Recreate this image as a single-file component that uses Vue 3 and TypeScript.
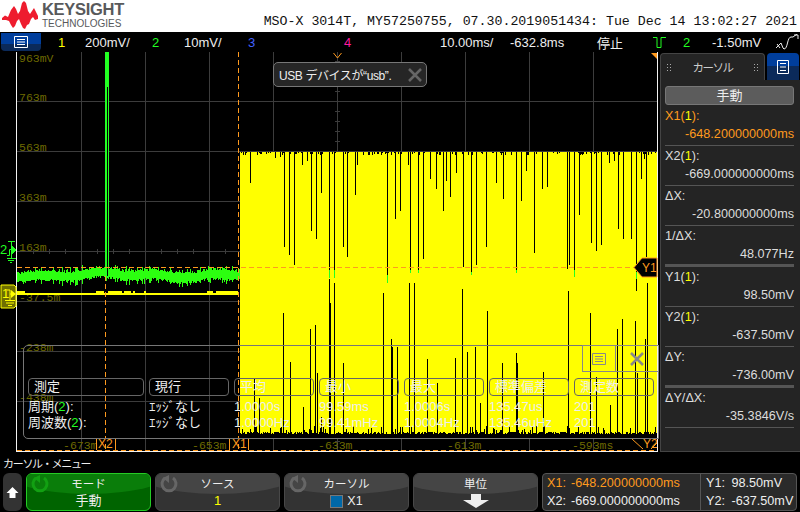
<script setup lang="ts">
import { computed } from 'vue';

interface StatusItem {
  text: string;
  x: number;
  color: string;
}

// left edge of every item in the status strip
const statusItems: StatusItem[] = [
  { text: '1', x: 58, color: '#ffff00' },
  { text: '200mV/', x: 85, color: '#eee' },
  { text: '2', x: 152, color: '#22ff22' },
  { text: '10mV/', x: 184, color: '#eee' },
  { text: '3', x: 248, color: '#4060ff' },
  { text: '4', x: 344, color: '#ff1aa0' },
  { text: '10.00ms/', x: 440, color: '#eee' },
  { text: '-632.8ms', x: 510, color: '#eee' },
  { text: '停止', x: 597, color: '#eee' }
];

const statusWidths = computed(() =>
  statusItems.map((item, i) => (statusItems[i + 1]?.x ?? 650) - item.x)
);

const gridX = [81, 145, 209, 273, 337, 401, 465, 529, 593];
const gridY = [101, 151, 201, 251, 301, 351, 401];

const yLabels = [
  ['963mV', 62],
  ['763m', 101],
  ['563m', 151],
  ['363m', 201],
  ['163m', 251],
  ['-37.5m', 301],
  ['-238m', 351],
  ['-438m', 401]
] as const;

const xLabels = [
  ['-673m', 63],
  ['-653m', 192],
  ['-633m', 318],
  ['-613m', 447],
  ['-593ms', 572]
] as const;

// black gaps hanging from the top of the yellow block: x, end y
const topGaps = [
  [250, 183], [275, 158], [280, 157], [284, 247], [289, 255], [294, 265], [302, 165], [307, 161],
  [311, 231], [316, 239], [321, 193], [329, 278], [334, 278], [343, 247], [347, 257], [355, 195],
  [357, 165], [387, 275], [395, 219], [400, 211], [408, 165], [410, 273], [418, 273], [423, 259],
  [430, 179], [436, 189], [443, 211], [446, 181], [450, 197], [456, 173], [463, 267], [471, 275],
  [476, 265], [486, 247], [496, 183], [503, 199], [516, 273], [521, 201], [526, 171], [534, 253],
  [542, 189], [547, 187], [567, 269], [569, 265], [574, 277], [579, 215], [591, 243], [596, 251],
  [601, 245], [609, 163], [614, 161], [618, 229], [623, 239], [631, 239], [636, 291], [641, 179],
  [644, 159], [646, 257]
];

// black gaps standing on the bottom of the yellow block: x, start y
const bottomGaps = [
  [254, 379], [259, 398], [283, 313], [290, 362], [303, 407], [310, 329], [315, 325], [317, 373],
  [321, 417], [329, 279], [330, 303], [334, 283], [343, 363], [383, 293], [391, 339], [392, 347],
  [397, 347], [409, 283], [414, 283], [427, 359], [437, 383], [455, 358], [462, 289], [467, 352],
  [475, 347], [480, 403], [487, 311], [502, 363], [516, 353], [517, 363], [543, 372], [568, 291],
  [590, 313], [596, 377], [610, 405], [617, 329], [622, 319], [635, 321], [637, 373], [645, 339],
  [647, 283], [655, 427]
];

// little bits of the green trace showing through the gaps
const greenBits = [
  [329, 270, 8], [334, 270, 8], [387, 275, 8], [410, 270, 3], [418, 270, 3],
  [471, 272, 3], [516, 270, 3], [574, 270, 7], [636, 272, 7]
];

function rng(seed: number) {
  let s = seed;
  return () => {
    s = (s * 1664525 + 1013904223) % 4294967296;
    return s / 4294967296;
  };
}

const topNotches = computed(() => {
  const r = rng(11);
  let d = '';
  for (let x = 241; x < 657; x++) {
    if (r() < 0.25) d += `M${x + 0.5} 152V${153 + Math.floor(r() * 3)}`;
  }
  return d;
});

const bottomFringe = computed(() => {
  const r = rng(37);
  let d = '';
  for (let x = 240; x < 657; x++) {
    const up = r() < 0.12 ? 4 + Math.floor(r() * 5) : Math.floor(r() * 3);
    d += `M${x + 0.5} ${434 - up}V438`;
  }
  return d;
});

const greenTrace = computed(() => {
  const r = rng(5);
  let d = '';
  for (let x = 17; x < 240; x++) {
    const mid = 275 + Math.sin(x / 9) * 1.5 + Math.sin(x / 23) * 1.5;
    const wild = r() < 0.15 ? 3 : 0;
    const top = Math.round(mid - 3.5 - r() * 3 - wild);
    const bot = Math.round(mid + 3.5 + r() * 3 + wild);
    d += `M${x + 0.5} ${top}V${bot}`;
  }
  return d;
});

const yellowBumps = [[17, 8], [96, 8], [108, 14], [124, 7], [133, 2], [144, 2], [207, 6], [216, 22]];

interface MeasureRow {
  name: string;
  cells: string[];
}

const measureHeads = ['現行', '平均', '最小', '最大', '標準偏差', '測定数'];
const measureRows: MeasureRow[] = [
  { name: '周期', cells: ['ｴｯｼﾞなし', '1.0000s', '99.59ms', '1.0006s', '135.47us', '201'] },
  { name: '周波数', cells: ['ｴｯｼﾞなし', '1.0000Hz', '99.41mHz', '1.0004Hz', '135.46uHz', '201'] }
];

interface CursorRow {
  label: string;
  ch?: string;
  value: string;
  active?: boolean;
  thick?: boolean;
}

const cursorRows: CursorRow[] = [
  { label: 'X1(', ch: '1', value: '-648.200000000ms', active: true },
  { label: 'X2(', ch: '1', value: '-669.000000000ms' },
  { label: 'ΔX:', value: '-20.800000000ms' },
  { label: '1/ΔX:', value: '48.077Hz', thick: true },
  { label: 'Y1(', ch: '1', value: '98.50mV' },
  { label: 'Y2(', ch: '1', value: '-637.50mV' },
  { label: 'ΔY:', value: '-736.00mV', thick: true },
  { label: 'ΔY/ΔX:', value: '-35.3846V/s' }
];
</script>

<template>
  <div class="scope">
    <header class="head">
      <div class="logo">
        <svg class="wave" width="38" height="32" viewBox="0 0 38 32">
          <path
            fill="#ee1c2e"
            d="M1 18 4 15.500 7 17 10 10 13 6 15 9 17 14 19 11 21 3 23 1 25 3 27 11 29 14 31 11 33 8 35 12 37 16 37 19 34 20 32 17 30 19 28 24 26 25 24 29 22 28 20 24 18 19 16 21 14 26 12 28 10 25 8 21 5 20 1 20Z"
          />
        </svg>
        <div class="brand">
          <span class="brand-top">KEYSIGHT</span>
          <span class="brand-sub">TECHNOLOGIES</span>
        </div>
      </div>
      <div class="title">MSO-X 3014T, MY57250755, 07.30.2019051434: Tue Dec 14 13:02:27 2021</div>
    </header>

    <div class="status">
      <div class="menu-btn">
        <svg width="14" height="12" viewBox="0 0 14 12">
          <path fill="none" stroke="#fff" d="M.5.5h13v11H.500zM3 3.500h8M3 6h8M3 8.500h8" />
        </svg>
      </div>
      <div class="status-gap" />
      <span
        v-for="(item, i) in statusItems"
        :key="item.x"
        class="status-item"
        :style="{ width: statusWidths[i] + 'px', color: item.color }"
      >{{ item.text }}</span>
      <svg class="trig" width="13" height="13" viewBox="0 0 13 13">
        <path fill="none" stroke="#22ff22" d="M0 1.500h4v10h4v-10H13" />
      </svg>
      <span class="trig-ch">2</span>
      <span class="trig-lvl">-1.50mV</span>
      <svg class="run" width="24" height="16" viewBox="0 0 24 16">
        <path fill="none" stroke="#eee" d="M1 14 6 9l2 5 1 1c4 0 3-12 7-12h2l4-3M2 10l3 4M19 1h4v4" />
      </svg>
    </div>

    <div class="main">
      <div class="plot">
        <svg class="canvas" width="660" height="400" viewBox="0 52 660 400" shape-rendering="crispEdges">
          <rect x="0" y="52" width="660" height="400" fill="#000" />
          <path v-for="x in gridX" :key="x" :d="`M${x + 0.5} 52V450`" stroke="#3c3c3c" />
          <path v-for="y in gridY" :key="y" :d="`M17 ${y + 0.5}H657`" stroke="#3c3c3c" />
          <path v-for="n in 39" :key="n" :d="`M${17 + n * 16 + 0.5} 249V254`" stroke="#3c3c3c" />
          <path v-for="n in 39" :key="n" :d="`M335 ${51 + n * 10 + 0.5}H340`" stroke="#3c3c3c" />

          <text v-for="[t, y] in yLabels" :key="t" class="axis" x="19" :y="y - 0">{{ t }}</text>

          <rect x="240" y="152" width="417" height="282" fill="#ffff00" />
          <path :d="topNotches" stroke="#000" />
          <path v-for="[x, y] in topGaps" :key="'t' + x" :d="`M${x + 0.5} 152V${y}`" stroke="#000" />
          <path v-for="[x, y] in bottomGaps" :key="'b' + x" :d="`M${x + 0.5} ${y}V434`" stroke="#000" />
          <rect v-for="[x, y, h] in greenBits" :key="'g' + x" :x="x" :y="y" width="1" :height="h" fill="#22ff22" />
          <path :d="bottomFringe" stroke="#000" />

          <rect x="17" y="293" width="222" height="2" fill="#ffff00" />
          <rect v-for="[x, w] in yellowBumps" :key="'y' + x" :x="x" y="291" :width="w" height="2" fill="#ffff00" />
          <path :d="greenTrace" stroke="#2cff10" />
          <rect x="105" y="52" width="4" height="226" fill="#22ff22" />
          <path d="M107.500 87V276" stroke="#000" />

          <path class="dash" d="M105.500 276V450" />
          <path class="dash" d="M238.500 52V450" />
          <path class="dash" d="M17 267.500H636" />
          <path class="dash" d="M17 450.500H658" />

          <path d="M17 51.500H658M16.500 52V452M657.500 52V452M16 451.500H658" stroke="#f2f2f2" fill="none" />
          <path d="M651 53h6v6z" fill="#ff9a1e" shape-rendering="auto" />
          <path d="M333.500 53 337.500 58 341.500 53" fill="none" stroke="#ff9a1e" shape-rendering="auto" />

          <text v-for="[t, x] in xLabels" :key="t" class="axis" :x="x" y="449">{{ t }}</text>

          <path d="M96 438.500h19.500V450M96.500 438V450" fill="#000" stroke="#ff9a1e" />
          <text class="flag" x="98" y="448">X2</text>
          <path d="M229 438.500h19.500V450M229.500 438V450" fill="#000" stroke="#ff9a1e" />
          <text class="flag" x="232" y="448">X1</text>
          <path d="M632 439l11 10M651 449l6-6" fill="none" stroke="#ff9a1e" shape-rendering="auto" />
          <text class="flag" x="643" y="448">Y2</text>

          <path d="M657 258H642L634 267.500 642 277H657Z" fill="#000" stroke="#ff9a1e" shape-rendering="auto" />
          <text class="flag" x="642" y="272">Y1</text>

          <g shape-rendering="auto" fill="none" stroke="#22ff22">
            <text x="0" y="254" class="gnd" fill="#22ff22" stroke="none">2</text>
            <path d="M8 241.500h7M11.500 241.500V258M7 258.500h9M8 260.500h6M10 262.500h2M7 255.500h2.500V249.500H15" />
            <path d="M12 246l4 4-4 4z" fill="#22ff22" />
          </g>
          <g shape-rendering="auto">
            <path d="M1 285h13l2 2v19l-2 2H1z" fill="#6e6e00" stroke="#ffff00" />
            <text x="2" y="298" class="gnd" fill="#ffff00">1</text>
            <path d="M7 290h3v10M5 300.500h10M6 303h8M8 305.500h4M10 294h3" fill="none" stroke="#ffff00" />
            <path d="M11 290l5 4-5 4z" fill="#ffff00" />
          </g>
        </svg>

        <div class="notice">
          <span class="notice-text">USB デバイスが“usb”.</span>
          <svg width="16" height="16" viewBox="0 0 16 16">
            <path d="M2 2 14 14M14 2 2 14" stroke="#666" stroke-width="2.500" />
          </svg>
        </div>

        <div class="measure">
          <div class="measure-tabs">
            <div class="measure-tab">
              <svg width="16" height="12" viewBox="0 0 16 12">
                <path fill="none" stroke="#888" d="M1.500.500h13v11h-13zM4 3.500h8M4 6h8M4 8.500h8" />
              </svg>
            </div>
            <div class="measure-tab wide">
              <svg width="14" height="14" viewBox="0 0 14 14">
                <path d="M1 1 13 13M13 1 1 13" stroke="#888" stroke-width="2.500" />
              </svg>
            </div>
          </div>
          <div class="measure-grid">
            <div class="measure-head first">測定</div>
            <div v-for="h in measureHeads" :key="h" class="measure-head">{{ h }}</div>
            <template v-for="row in measureRows" :key="row.name">
              <div class="measure-cell">{{ row.name }}(<span class="green">2</span>):</div>
              <div v-for="(c, i) in row.cells" :key="i" class="measure-cell">{{ c }}</div>
            </template>
          </div>
        </div>
      </div>

      <aside class="side">
        <div class="tabs">
          <div class="tab">
            <span class="grip" />
            <span class="tab-label">カーソル</span>
            <span class="grip" />
          </div>
          <div class="tab-blue">
            <svg width="14" height="14" viewBox="0 0 14 14">
              <path fill="none" stroke="#fff" d="M1.500.500h11v13h-11zM4 3.500h6M4 7h6M4 10.500h6" />
            </svg>
          </div>
        </div>
        <div class="side-body">
          <div class="mode-btn">手動</div>
          <div
            v-for="row in cursorRows"
            :key="row.label"
            class="cursor-row"
            :class="{ active: row.active, thick: row.thick }"
          >
            <div class="cursor-label">
              {{ row.label }}<template v-if="row.ch"><span class="yellow">{{ row.ch }}</span>):</template>
            </div>
            <div class="cursor-value">{{ row.value }}</div>
          </div>
        </div>
      </aside>
    </div>

    <footer class="foot">
      <div class="foot-title">カーソル・メニュー</div>
      <div class="keys">
        <div class="key arrow">
          <svg width="13" height="13" viewBox="0 0 13 13">
            <path fill="#fff" d="M6.500 1 12.500 7H9.500V12H3.500V7H.5Z" />
          </svg>
        </div>
        <div class="key soft on">
          <svg class="spin" width="20" height="18" viewBox="0 0 20 18">
            <path fill="none" stroke="currentColor" stroke-width="3" d="M6 3a7 7 0 1 0 8 0" />
            <path fill="currentColor" d="M10 0v8L4 3z" />
          </svg>
          <span class="key-top">モード</span>
          <span class="key-bot">手動</span>
        </div>
        <div class="key soft">
          <svg class="spin" width="20" height="18" viewBox="0 0 20 18">
            <path fill="none" stroke="currentColor" stroke-width="3" d="M6 3a7 7 0 1 0 8 0" />
            <path fill="currentColor" d="M10 0v8L4 3z" />
          </svg>
          <span class="key-top">ソース</span>
          <span class="key-bot yellow">1</span>
        </div>
        <div class="key soft">
          <svg class="spin" width="20" height="18" viewBox="0 0 20 18">
            <path fill="none" stroke="currentColor" stroke-width="3" d="M6 3a7 7 0 1 0 8 0" />
            <path fill="currentColor" d="M10 0v8L4 3z" />
          </svg>
          <span class="key-top">カーソル</span>
          <span class="key-bot small"><i class="swatch" />X1</span>
        </div>
        <div class="key soft">
          <span class="key-top">単位</span>
          <svg class="key-bot" width="26" height="16" viewBox="0 0 26 16">
            <path fill="#eee" d="M8 1h10v6h8L13 15 0 7h8z" />
          </svg>
        </div>
        <div class="readout">
          <div class="read-x">
            <div class="orange"><span class="read-name">X1:</span>-648.200000000ms</div>
            <div><span class="read-name">X2:</span>-669.000000000ms</div>
          </div>
          <div class="read-y">
            <div>Y1: 98.50mV</div>
            <div>Y2: -637.50mV</div>
          </div>
        </div>
      </div>
    </footer>
  </div>
</template>

<style scoped>
.scope {
  width: 800px;
  height: 512px;
  overflow: hidden;
  background: #000;
  color: #eee;
  font-family: "Liberation Sans", "Noto Sans CJK JP", sans-serif;
  font-size: 13px;
  display: flex;
  flex-direction: column;
}
.head {
  height: 32px;
  background: #fff;
  display: flex;
  justify-content: space-between;
}
.logo {
  display: flex;
  padding-left: 1px;
}
.wave {
  display: block;
}
.brand {
  display: flex;
  flex-direction: column;
  margin-left: 3px;
  color: #58595b;
  line-height: 1;
}
.brand-top {
  font-size: 16.500px;
  font-weight: 700;
  letter-spacing: -0.3px;
  margin-top: 1px;
}
.brand-sub {
  font-size: 10px;
  margin-top: 1px;
}
.title {
  font-family: "Liberation Mono", monospace;
  font-size: 13.280px;
  color: #111;
  padding: 14px 3px 0 0;
  line-height: 15px;
  white-space: nowrap;
}
.status {
  height: 20px;
  display: flex;
  align-items: center;
  white-space: nowrap;
}
.menu-btn {
  width: 40px;
  height: 18px;
  margin-left: 1px;
  border-radius: 0 0 4px 4px;
  background: linear-gradient(#003e9c 0 60%, #0b2a5a 60%);
  display: flex;
  align-items: center;
  justify-content: center;
}
.status-gap {
  width: 17px;
}
.status-item {
  display: block;
  flex: none;
}
.trig {
  margin-left: 3px;
  flex: none;
}
.trig-ch {
  color: #22ff22;
  margin-left: 17px;
  width: 29px;
  flex: none;
}
.trig-lvl {
  width: 63px;
  flex: none;
}
.run {
  flex: none;
}
.main {
  height: 400px;
  display: flex;
}
.plot {
  position: relative;
  width: 660px;
  height: 400px;
  flex: none;
}
.canvas {
  display: block;
}
.axis {
  font-family: "Liberation Mono", monospace;
  font-size: 11.500px;
  fill: #6e6a00;
}
.flag {
  font-family: "Liberation Sans", sans-serif;
  font-size: 12px;
  fill: #ff9a1e;
}
.gnd {
  font-family: "Liberation Sans", sans-serif;
  font-size: 13px;
}
.dash {
  fill: none;
  stroke: #ff9a1e;
  stroke-dasharray: 5 3;
}
.notice {
  position: absolute;
  left: 273px;
  top: 10px;
  width: 154px;
  height: 25px;
  box-sizing: border-box;
  border: 1px solid #777;
  border-radius: 5px;
  background: #262626;
  display: flex;
  align-items: center;
  justify-content: space-between;
  padding: 0 3px 0 5px;
  font-size: 12px;
  white-space: nowrap;
}
.notice-text {
  letter-spacing: -0.4px;
}
.measure {
  position: absolute;
  left: 23px;
  top: 293px;
  width: 636px;
  height: 94px;
  box-sizing: border-box;
  border: 1px solid #777;
  border-radius: 5px 0 0 5px;
  padding: 32px 0 0 4px;
}
.measure-tabs {
  position: absolute;
  right: -1px;
  top: -1px;
  display: flex;
}
.measure-tab {
  width: 34px;
  height: 27px;
  box-sizing: border-box;
  border: 1px solid #888;
  margin-left: -1px;
  display: flex;
  align-items: center;
  justify-content: center;
}
.measure-tab.wide {
  width: 44px;
}
.measure-grid {
  display: grid;
  grid-template-columns: 116px repeat(6, 80px);
  column-gap: 5px;
  grid-auto-rows: 18px;
  white-space: nowrap;
}
.measure-head {
  height: 18px;
  box-sizing: border-box;
  border: 1px solid #666;
  border-radius: 4px;
  padding-left: 5px;
  line-height: 16px;
  margin-bottom: 3px;
}
.measure-grid > .measure-cell:nth-child(-n + 14) {
  margin-top: 2px;
}
.measure-cell {
  line-height: 18px;
}
.green {
  color: #22ff22;
}
.yellow {
  color: #ffff00;
}
.orange {
  color: #ff9a1e;
}
.side {
  width: 140px;
  flex: none;
  height: 399px;
  border-bottom: 1px solid #444;
  box-sizing: content-box;
  display: flex;
  flex-direction: column;
}
.tabs {
  height: 28px;
  display: flex;
  padding-top: 1px;
  box-sizing: border-box;
  background: #000;
}
.tab {
  width: 105px;
  background: #242424;
  border: 1px solid #444;
  border-bottom: 0;
  border-radius: 4px 4px 0 0;
  box-sizing: border-box;
  display: flex;
  align-items: center;
  justify-content: space-between;
  padding: 0 5px;
}
.grip {
  width: 6px;
  height: 9px;
  background-image: radial-gradient(#aaa 0.8px, transparent 1px);
  background-size: 3px 3px;
}
.tab-label {
  font-size: 11.500px;
  letter-spacing: -1.500px;
  color: #ccc;
}
.tab-blue {
  width: 32px;
  margin-left: 2px;
  border-radius: 4px 4px 0 0;
  background: linear-gradient(#003e9c 0 50%, #0b2a5a 50%);
  display: flex;
  align-items: center;
  justify-content: center;
}
.side-body {
  flex: 1;
  background: #242424;
  border-left: 1px solid #444;
  padding: 6px 7px 0 4px;
  box-sizing: border-box;
}
.mode-btn {
  height: 19px;
  width: 129px;
  background: #5c5c5c;
  border: 1px solid #777;
  border-radius: 3px;
  text-align: center;
  line-height: 18px;
  box-sizing: border-box;
  margin-bottom: 1px;
}
.cursor-row {
  height: 40px;
  width: 129px;
  box-sizing: border-box;
  border-bottom: 1px solid #555;
  line-height: 19.500px;
  font-size: 12.650px;
  color: #ddd;
}
.cursor-row.thick {
  border-bottom-width: 3px;
  height: 41px;
}
.cursor-row.active {
  color: #ff9a1e;
}
.cursor-label {
  height: 19px;
  line-height: 20px;
}
.cursor-value {
  text-align: right;
}
.foot {
  flex: 1;
  display: flex;
  flex-direction: column;
}
.foot-title {
  height: 21px;
  line-height: 24px;
  padding-left: 3px;
  font-size: 11px;
  letter-spacing: -1.300px;
}
.keys {
  display: flex;
  gap: 4px;
  padding-left: 3px;
}
.key {
  height: 38px;
  box-sizing: border-box;
  border-radius: 6px;
  background: #333;
  position: relative;
  overflow: hidden;
  flex: none;
}
.arrow {
  width: 19px;
  display: flex;
  align-items: center;
  justify-content: center;
}
.soft {
  width: 125px;
  border: 1px solid #484848;
  display: flex;
  flex-direction: column;
  align-items: center;
  color: #eee;
}
.soft::before {
  content: "";
  position: absolute;
  left: -20%;
  right: -20%;
  top: -30px;
  height: 50px;
  border-radius: 50%;
  background: #454545;
}
.soft.on {
  border-color: #25cc25;
  background: #006400;
}
.soft.on::before {
  background: #0a7d0a;
}
.soft > * {
  position: relative;
}
.soft > .spin {
  position: absolute;
  left: 3px;
  top: 1px;
  color: #666;
}
.on > .spin {
  color: #12a012;
}
.key-top {
  height: 18px;
  line-height: 20px;
  font-size: 11.500px;
}
.key-bot {
  display: flex;
  align-items: center;
  line-height: 18px;
  height: 18px;
  font-size: 13px;
}
.key-bot.small {
  font-size: 12.500px;
}
.swatch {
  display: block;
  width: 13px;
  height: 13px;
  box-sizing: border-box;
  background: #0068a8;
  border: 1px solid #777;
  margin-right: 4px;
}
.readout {
  width: 255px;
  height: 38px;
  box-sizing: border-box;
  border: 1px solid #555;
  border-radius: 4px;
  background: #2a2a2a;
  display: flex;
  font-size: 12.650px;
  line-height: 18px;
  white-space: nowrap;
}
.read-x {
  width: 153px;
  padding-left: 4px;
  border-right: 1px solid #555;
}
.read-name {
  display: inline-block;
  width: 24px;
}
.read-y {
  padding-left: 5px;
  word-spacing: 3px;
}
</style>
